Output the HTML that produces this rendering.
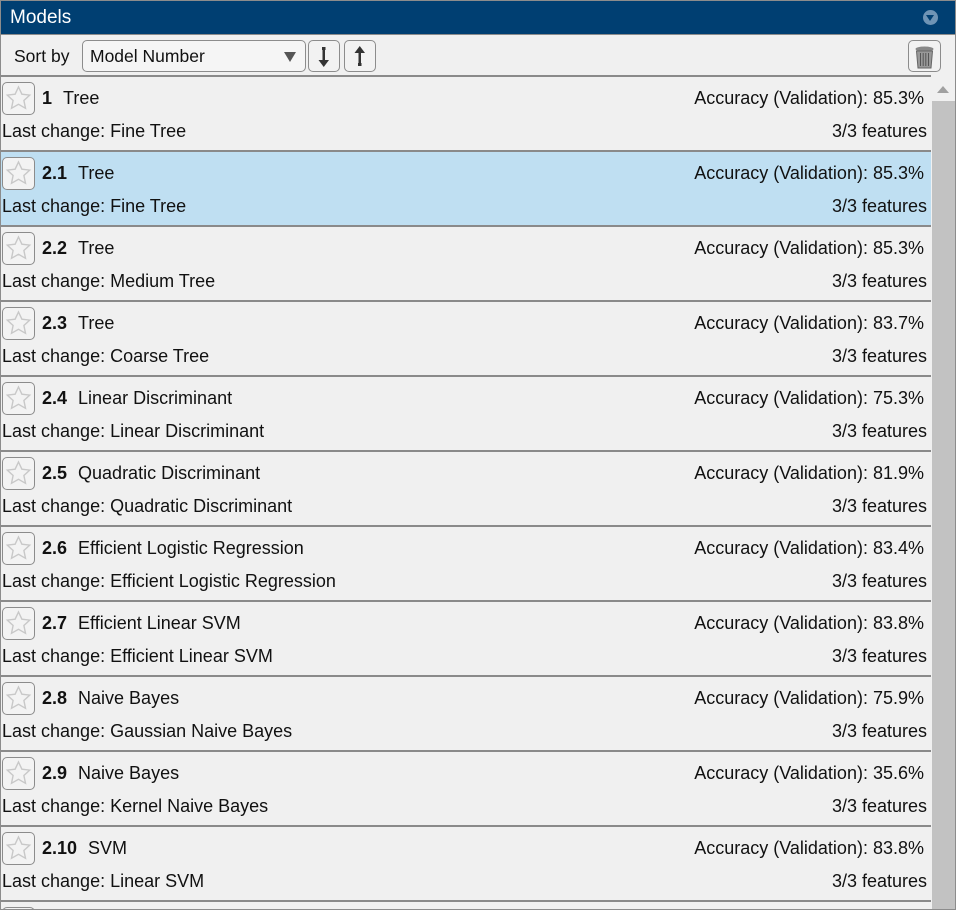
<!DOCTYPE html>
<html><head><meta charset="utf-8"><style>
*{box-sizing:border-box;margin:0;padding:0}
html,body{width:956px;height:910px;overflow:hidden}
body{background:#f0f0f0;font-family:"Liberation Sans",Arial,sans-serif;color:#111;position:relative}
.frame{position:absolute;left:0;top:0;width:956px;height:910px;border:1px solid #8c8c8c;z-index:5;pointer-events:none}
.title{position:absolute;left:1px;top:1px;width:954px;height:33px;background:#003f72;color:#fff;font-size:19px;line-height:33px;padding-left:9px}
.tri{position:absolute;right:17px;top:9px;width:15px;height:15px;border-radius:50%;background:#6f94b5}
.tri:after{content:"";position:absolute;left:3px;top:5px;border-left:4.5px solid transparent;border-right:4.5px solid transparent;border-top:6px solid #003f72}
.tb{position:absolute;left:1px;top:34px;width:954px;height:42px;border-top:1px solid #8c8c8c}
.sort{position:absolute;left:13px;top:11px;font-size:17.5px}
.sel{position:absolute;left:81px;top:5px;width:224px;height:32px;border:1px solid #8c8c8c;border-radius:5px;background:#f5f5f5;font-size:17.5px;line-height:30px;padding-left:7px}
.sel:after{content:"";position:absolute;right:9px;top:11px;border-left:6px solid transparent;border-right:6px solid transparent;border-top:10px solid #555}
.btn{position:absolute;top:5px;width:32px;height:32px;border:1px solid #8c8c8c;border-radius:5px;background:#f2f2f2}
.list{position:absolute;left:1px;top:75px;width:930px;height:834px;overflow:hidden}
.row{position:absolute;left:0;width:930px;height:75px;border-top:2px solid #8a8a8a;font-size:18px}
.row.sel2{background:#bfdff2}
.star{position:absolute;left:1px;top:5px;width:33px;height:33px;border:1px solid #8c8c8c;border-radius:5px;background:#f3f3f3}
.name{position:absolute;left:41px;top:11px}
.name b{font-weight:bold;margin-right:11px}
.lc{position:absolute;left:1px;top:44px}
.acc{position:absolute;right:7px;top:11px}
.ft{position:absolute;right:4px;top:44px}
.sb{position:absolute;left:932px;top:76px;width:23px;height:833px;background:#c2c2c2}
.sbu{position:absolute;left:0;top:0;width:23px;height:25px;background:#f0f0f0}
.sbu:after{content:"";position:absolute;left:5px;top:10px;border-left:6px solid transparent;border-right:6px solid transparent;border-bottom:7px solid #a0a0a0}
</style></head><body>
<div class="frame"></div>
<div class="title">Models<div class="tri"></div></div>
<div class="tb">
<div class="sort">Sort by</div>
<div class="sel">Model Number</div>
<div class="btn" style="left:307px"><svg width="30" height="30" viewBox="0 0 30 30"><rect x="13" y="6" width="3.5" height="3" fill="#333"/><rect x="13.5" y="6" width="2.5" height="15" fill="#333"/><path d="M9.5 19h10.5l-5.25 7z" fill="#333"/></svg></div>
<div class="btn" style="left:343px"><svg width="30" height="30" viewBox="0 0 30 30"><rect x="13.5" y="10" width="2.5" height="14" fill="#333"/><path d="M9.5 12h10.5l-5.25-7z" fill="#333"/><rect x="13" y="22" width="3.5" height="3" fill="#333"/></svg></div>
<div class="btn" style="left:907px;width:33px"><svg width="31" height="31" viewBox="0 0 31 31"><ellipse cx="15.5" cy="8" rx="9" ry="2.5" fill="#888"/><path d="M7.5 10h16l-1.5 17h-13z" fill="#999" stroke="#666"/><path d="M11.5 12v13M14.2 12v13M16.8 12v13M19.5 12v13" stroke="#555"/></svg></div>
</div>
<div class="list">
<div class="row" style="top:0"><div class="star"><svg width="31" height="31" viewBox="0 0 31 31"><path d="M15.5 4l3.4 7.2 7.8.9-5.8 5.4 1.6 7.8-7-4-7 4 1.6-7.8-5.8-5.4 7.8-.9z" fill="none" stroke="#c8c8c8" stroke-width="1.4"/></svg></div><div class="name"><b>1</b>Tree</div><div class="acc">Accuracy (Validation): 85.3%</div><div class="lc">Last change: Fine Tree</div><div class="ft">3/3 features</div></div>
<div class="row sel2" style="top:75px"><div class="star"><svg width="31" height="31" viewBox="0 0 31 31"><path d="M15.5 4l3.4 7.2 7.8.9-5.8 5.4 1.6 7.8-7-4-7 4 1.6-7.8-5.8-5.4 7.8-.9z" fill="none" stroke="#c8c8c8" stroke-width="1.4"/></svg></div><div class="name"><b>2.1</b>Tree</div><div class="acc">Accuracy (Validation): 85.3%</div><div class="lc">Last change: Fine Tree</div><div class="ft">3/3 features</div></div>
<div class="row" style="top:150px"><div class="star"><svg width="31" height="31" viewBox="0 0 31 31"><path d="M15.5 4l3.4 7.2 7.8.9-5.8 5.4 1.6 7.8-7-4-7 4 1.6-7.8-5.8-5.4 7.8-.9z" fill="none" stroke="#c8c8c8" stroke-width="1.4"/></svg></div><div class="name"><b>2.2</b>Tree</div><div class="acc">Accuracy (Validation): 85.3%</div><div class="lc">Last change: Medium Tree</div><div class="ft">3/3 features</div></div>
<div class="row" style="top:225px"><div class="star"><svg width="31" height="31" viewBox="0 0 31 31"><path d="M15.5 4l3.4 7.2 7.8.9-5.8 5.4 1.6 7.8-7-4-7 4 1.6-7.8-5.8-5.4 7.8-.9z" fill="none" stroke="#c8c8c8" stroke-width="1.4"/></svg></div><div class="name"><b>2.3</b>Tree</div><div class="acc">Accuracy (Validation): 83.7%</div><div class="lc">Last change: Coarse Tree</div><div class="ft">3/3 features</div></div>
<div class="row" style="top:300px"><div class="star"><svg width="31" height="31" viewBox="0 0 31 31"><path d="M15.5 4l3.4 7.2 7.8.9-5.8 5.4 1.6 7.8-7-4-7 4 1.6-7.8-5.8-5.4 7.8-.9z" fill="none" stroke="#c8c8c8" stroke-width="1.4"/></svg></div><div class="name"><b>2.4</b>Linear Discriminant</div><div class="acc">Accuracy (Validation): 75.3%</div><div class="lc">Last change: Linear Discriminant</div><div class="ft">3/3 features</div></div>
<div class="row" style="top:375px"><div class="star"><svg width="31" height="31" viewBox="0 0 31 31"><path d="M15.5 4l3.4 7.2 7.8.9-5.8 5.4 1.6 7.8-7-4-7 4 1.6-7.8-5.8-5.4 7.8-.9z" fill="none" stroke="#c8c8c8" stroke-width="1.4"/></svg></div><div class="name"><b>2.5</b>Quadratic Discriminant</div><div class="acc">Accuracy (Validation): 81.9%</div><div class="lc">Last change: Quadratic Discriminant</div><div class="ft">3/3 features</div></div>
<div class="row" style="top:450px"><div class="star"><svg width="31" height="31" viewBox="0 0 31 31"><path d="M15.5 4l3.4 7.2 7.8.9-5.8 5.4 1.6 7.8-7-4-7 4 1.6-7.8-5.8-5.4 7.8-.9z" fill="none" stroke="#c8c8c8" stroke-width="1.4"/></svg></div><div class="name"><b>2.6</b>Efficient Logistic Regression</div><div class="acc">Accuracy (Validation): 83.4%</div><div class="lc">Last change: Efficient Logistic Regression</div><div class="ft">3/3 features</div></div>
<div class="row" style="top:525px"><div class="star"><svg width="31" height="31" viewBox="0 0 31 31"><path d="M15.5 4l3.4 7.2 7.8.9-5.8 5.4 1.6 7.8-7-4-7 4 1.6-7.8-5.8-5.4 7.8-.9z" fill="none" stroke="#c8c8c8" stroke-width="1.4"/></svg></div><div class="name"><b>2.7</b>Efficient Linear SVM</div><div class="acc">Accuracy (Validation): 83.8%</div><div class="lc">Last change: Efficient Linear SVM</div><div class="ft">3/3 features</div></div>
<div class="row" style="top:600px"><div class="star"><svg width="31" height="31" viewBox="0 0 31 31"><path d="M15.5 4l3.4 7.2 7.8.9-5.8 5.4 1.6 7.8-7-4-7 4 1.6-7.8-5.8-5.4 7.8-.9z" fill="none" stroke="#c8c8c8" stroke-width="1.4"/></svg></div><div class="name"><b>2.8</b>Naive Bayes</div><div class="acc">Accuracy (Validation): 75.9%</div><div class="lc">Last change: Gaussian Naive Bayes</div><div class="ft">3/3 features</div></div>
<div class="row" style="top:675px"><div class="star"><svg width="31" height="31" viewBox="0 0 31 31"><path d="M15.5 4l3.4 7.2 7.8.9-5.8 5.4 1.6 7.8-7-4-7 4 1.6-7.8-5.8-5.4 7.8-.9z" fill="none" stroke="#c8c8c8" stroke-width="1.4"/></svg></div><div class="name"><b>2.9</b>Naive Bayes</div><div class="acc">Accuracy (Validation): 35.6%</div><div class="lc">Last change: Kernel Naive Bayes</div><div class="ft">3/3 features</div></div>
<div class="row" style="top:750px"><div class="star"><svg width="31" height="31" viewBox="0 0 31 31"><path d="M15.5 4l3.4 7.2 7.8.9-5.8 5.4 1.6 7.8-7-4-7 4 1.6-7.8-5.8-5.4 7.8-.9z" fill="none" stroke="#c8c8c8" stroke-width="1.4"/></svg></div><div class="name"><b>2.10</b>SVM</div><div class="acc">Accuracy (Validation): 83.8%</div><div class="lc">Last change: Linear SVM</div><div class="ft">3/3 features</div></div>
<div class="row" style="top:825px"><div class="star"></div></div>
</div>
<div class="sb"><div class="sbu"></div></div>
</body></html>
